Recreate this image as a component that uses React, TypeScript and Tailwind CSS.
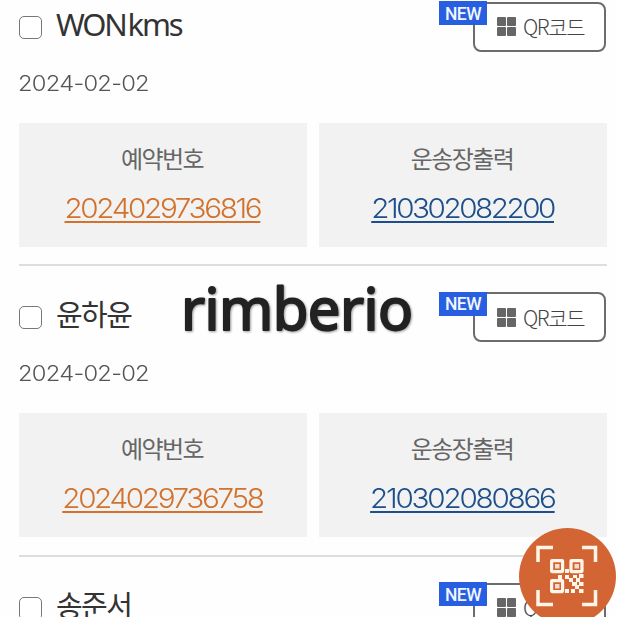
interface Shipment {
	name: string;
	nameClass: string;
	date: string;
	reservation: string;
	reservationClass: string;
	waybill: string;
	waybillClass: string;
}

const SHIPMENTS: Shipment[] = [
	{
		name: "WON kms",
		nameClass: "text-[31px] tracking-[-2.2px] [word-spacing:-4px] -mt-[6px]",
		date: "2024-02-02",
		reservation: "2024029736816",
		reservationClass: "tracking-[-2.1px]",
		waybill: "210302082200",
		waybillClass: "tracking-[-2.2px]",
	},
	{
		name: "윤하윤",
		nameClass: "text-[29px] tracking-[-1.6px] -mt-[4px]",
		date: "2024-02-02",
		reservation: "2024029736758",
		reservationClass: "tracking-[-2.1px]",
		waybill: "210302080866",
		waybillClass: "tracking-[-2px]",
	},
	{
		name: "송준서",
		nameClass: "text-[29px] tracking-[-1.6px] -mt-[4px]",
		date: "2024-02-02",
		reservation: "2024029736762",
		reservationClass: "tracking-[-2.1px]",
		waybill: "210302080870",
		waybillClass: "tracking-[-2px]",
	},
];

const QrButton = () => (
	<button className="relative flex h-[50px] w-[133px] items-center rounded-[8px] border-2 border-[#6c6c6c] bg-white pl-[22px]">
		<span className="absolute -left-[36px] -top-[2.5px] flex h-[24px] w-[48px] items-center justify-center bg-[#285fe0] pt-[2px] font-['Roboto',sans-serif] text-[17.5px] font-medium tracking-[-0.6px] text-[#f0f6ff]">
			NEW
		</span>
		<span className="grid grid-cols-2 gap-px">
			<i className="size-[9px] rounded-[1px] bg-[#666]" />
			<i className="size-[9px] rounded-[1px] bg-[#666]" />
			<i className="size-[9px] rounded-[1px] bg-[#666]" />
			<i className="size-[9px] rounded-[1px] bg-[#666]" />
		</span>
		<span className="ml-[7px] whitespace-nowrap font-['Noto_Sans_CJK_KR',sans-serif] text-[21px] font-light leading-none tracking-[-1.4px] text-[#444]">
			QR코드
		</span>
	</button>
);

interface NumberCardProps {
	label: string;
	value: string;
	className: string;
}

const NumberCard = ({ label, value, className }: NumberCardProps) => (
	<div className="flex h-[124px] flex-1 flex-col items-center bg-[#f2f2f2] pt-5">
		<span className="-ml-[2px] font-['Noto_Sans_CJK_KR',sans-serif] text-[24px] leading-[30px] tracking-[-1.6px] text-[#666]">
			{label}
		</span>
		<a
			className={`mt-[19px] -ml-px scale-x-[1.12] whitespace-nowrap font-['Inter',sans-serif] text-[26.5px] font-[340] leading-[32px] underline decoration-2 underline-offset-[3px] ${className}`}
		>
			{value}
		</a>
	</div>
);

const ShipmentItem = ({ item }: { item: Shipment }) => (
	<li className="h-[290.5px] border-b-2 border-[#dedede] pt-[26px]">
		<div className="flex h-[50px] items-center pr-px">
			<span className="mt-px size-[23px] rounded-[5px] border-[1.5px] border-[#777] bg-white" />
			<span
				className={`ml-[14px] flex-1 whitespace-nowrap font-['Noto_Sans','Noto_Sans_CJK_KR',sans-serif] leading-[40px] text-[#333] ${item.nameClass}`}
			>
				{item.name}
			</span>
			<QrButton />
		</div>
		<p className="-ml-px mt-[17px] w-fit origin-left scale-x-[1.08] font-['Inter',sans-serif] text-[22px] font-light leading-[28px] tracking-[-0.7px] text-[#555]">
			{item.date}
		</p>
		<div className="mt-[26px] flex gap-[12px]">
			<NumberCard
				label="예약번호"
				value={item.reservation}
				className={`text-[#d2722c] ${item.reservationClass}`}
			/>
			<NumberCard
				label="운송장출력"
				value={item.waybill}
				className={`text-[#1c4f8c] ${item.waybillClass}`}
			/>
		</div>
	</li>
);

const Watermark = () => (
	<svg
		className="pointer-events-none absolute left-[180px] top-[270px] h-[80px] w-[240px] drop-shadow-[1px_1px_1px_#999]"
		viewBox="0 0 240 80"
	>
		<text
			x="1"
			y="60"
			textLength="232"
			className="fill-[#222] stroke-[#222] stroke-2 font-['Noto_Sans',sans-serif] text-[58px] font-normal"
			strokeLinejoin="round"
		>
			rimberio
		</text>
	</svg>
);

const ScanButton = () => (
	<button className="absolute left-[519px] top-[528px] size-[97px] rounded-full bg-[#d36535]">
		<svg viewBox="0 0 97 97" className="size-full" fill="none">
			<path
				d="M19 34V19.500H34M63 19.500H76.500V34M76.500 62V76.500H63M34 76.500H19V62"
				stroke="#fff5e8"
				strokeWidth="3.500"
			/>
			<g stroke="#fff5e8" strokeWidth="3.200">
				<rect x="32.600" y="32.600" width="11" height="11" rx="0.500" />
				<rect x="52" y="32.600" width="11" height="11" rx="0.500" />
				<rect x="32.600" y="52.600" width="11" height="11" rx="0.500" />
			</g>
			<g fill="#f3dccb">
				<path d="M36 36h4.500v4.500h-4.500zM55.500 36h4.500v4.500h-4.500zM36 56h4.500v4.500h-4.500z" />
			</g>
			<g fill="#fff5e8">
				<path d="M46 41h4v4h-4zM39 47h4v4h-4zM46 47h4v4h-4zM50 50h4v4h-4zM54 47h4v3h-4zM60 46h4.500v4h-4.500zM57 50h4v4h-4zM53 54h5v4h-5zM60 54h4.500v4h-4.500zM46 61h4v4h-4zM52 61h4v4h-4zM56 57h4v4h-4zM60 61h4.500v4h-4.500z" />
			</g>
		</svg>
	</button>
);

const App = () => (
	<main className="relative h-[617px] w-[617px] overflow-hidden bg-[#fefefe]">
		<ul className="-mt-[24.5px] ml-[19px] w-[588px]">
			{SHIPMENTS.map((item) => (
				<ShipmentItem key={item.name} item={item} />
			))}
		</ul>
		<Watermark />
		<ScanButton />
	</main>
);

export default App;
